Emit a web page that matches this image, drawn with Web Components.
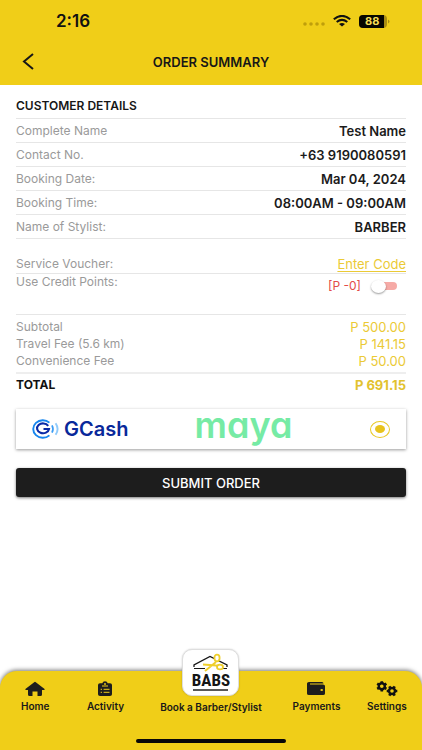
<!DOCTYPE html>
<html lang="en">
<head>
<meta charset="utf-8">
<meta name="viewport" content="width=device-width, initial-scale=1">
<title>Order Summary</title>
<style>
html, body { margin: 0; }
body { font-family: Inter, Roboto, "Liberation Sans", sans-serif; color: #171717; background: #fff;
  --brand: #f0ce18; --ink: #1d1d1d; --muted: #9a9a9a; --gold: #ebca35; --line: #e6e6e6; }
</style>
</head>
<body>
<order-page></order-page>
<script>
const define = (name, html) => customElements.define(name, class extends HTMLElement {
  constructor() {
    super();
    this.attachShadow({ mode: "open" }).innerHTML = html;
  }
});

define("status-bar", `
<style>
:host { display: flex; justify-content: space-between; align-items: center; height: 42px; padding: 0 32px 0 56px; color: #111; }
time { font-size: 17px; font-weight: 600; line-height: 20px; }
div { display: flex; align-items: center; gap: 8px; }
svg { display: block; }
.level { position: relative; display: flex; }
.level span { position: absolute; left: 6px; top: 0; font-size: 11px; line-height: 13px; font-weight: 700; color: #f5dc55; }
</style>
<time>2:16</time>
<div>
<svg width="22" height="10" viewBox="0 -7 22 10" fill="#bf9f0b"><circle cx="2" cy="1" r="1.8" /><circle cx="8" cy="1" r="1.8"/><circle cx="14" cy="1" r="1.8"/><circle cx="20" cy="1" r="1.8"/></svg>
<svg width="18" height="12" viewBox="0 0 18 12" fill="none" stroke="#111" stroke-width="2.1"><path d="M.8 4.2Q9-2.4 17.2 4.2M3.7 7Q9 2.8 14.3 7"/><path d="M9 11.6 6 9Q9 6.8 12 9Z" fill="#111" stroke="none"/></svg>
<span class="level"><svg width="31" height="13" viewBox="0 0 31 13"><rect width="28" height="13" rx="4" fill="#a98d12"/><path d="M4 0H25V13H4Q0 13 0 9V4Q0 0 4 0Z" fill="#070700"/><path d="M29 4.5Q32 6.5 29 8.5Z" fill="#a98d12"/></svg><span>88</span></span>
</div>`);

define("page-header", `
<style>
:host { display: block; background: var(--brand); }
header { display: grid; grid-template-columns: 40px 1fr 40px; align-items: center; height: 43px; padding: 0 8px 4px; box-sizing: border-box; }
button { width: 40px; height: 36px; border: 0; padding: 0; background: none; display: grid; place-items: center; color: #171717; }
h1 { margin: 0; font-size: 13px; line-height: 16px; font-weight: 600; text-align: center; }
</style>
<status-bar></status-bar>
<header><button type="button" aria-label="Back"><svg width="12" height="17" viewBox="0 0 12 17" fill="none" stroke="currentColor" stroke-width="2"><path d="M11 1 2 8.5 11 16"/></svg></button>
<h1><slot></slot></h1></header>`);

define("detail-row", `
<style>
:host { display: flex; justify-content: space-between; align-items: center; height: 24px; box-sizing: border-box; border-bottom: 1px solid var(--line); font-size: 12px; line-height: 16px; color: var(--muted); }
b { font-size: 13px; font-weight: 600; color: #1b1b1b; }
:host([plain]) { border: 0; height: 17px; }
:host([plain]) b { font-weight: 400; color: var(--gold); }
:host([total]) { border: 0; height: 22px; color: #111; font-weight: 700; }
:host([total]) b { color: #e2c22e; font-weight: 700; }
:host([voucher]) { height: 20px; }
:host([voucher]) b { font-weight: 400; }
</style>
<span><slot></slot></span><b><slot name="value"></slot></b>`);

define("points-toggle", `
<style>
:host { display: flex; justify-content: space-between; align-items: flex-start; height: 41px; box-sizing: border-box; border-bottom: 1px solid var(--line); font-size: 12px; line-height: 16px; color: var(--muted); }
div { display: flex; gap: 10px; align-items: center; padding: 4px 8px 0 0; }
output { color: #e44b49; }
input { appearance: none; margin: 0; width: 27px; height: 14px; display: flex; align-items: center; }
input::after { content: ""; width: 24px; height: 8px; margin-left: -13px; border-radius: 4px; background: #f6aaa6; }
input::before { content: ""; flex: none; z-index: 1; width: 15px; height: 13px; border-radius: 50%; background: #fff; box-shadow: 0 1px 2px #0006; }
input:checked::before { order: 1; margin-left: -13px; }
input:checked::after { margin-left: 0; }
</style>
<label for="points">Use Credit Points:</label>
<div><output for="points">[P -0]</output><input id="points" type="checkbox" role="switch"></div>`);

define("gcash-logo", `
<style>
:host { display: flex; align-items: center; gap: 4px; color: #09289a; font-size: 20px; line-height: 22px; font-weight: 600; }
svg { display: block; }
</style>
<svg width="28" height="20" viewBox="0 0 28 20" fill="none">
<path d="M17.4 3.600A9.600 8.800 0 1 0 17.400 16.400" stroke="#1686ee" stroke-width="1.900"/>
<path d="M16.200 6.800A6 4.900 0 1 0 17 10H11.500" stroke="#0a2aa6" stroke-width="2.100"/>
<path d="M20 6.300Q22 10 20 13.700" stroke="#3b9df5" stroke-width="1.700"/>
<path d="M23.600 4.300Q27.600 10 23.600 15.700" stroke="#8fcafb" stroke-width="1.900"/></svg><span>GCash</span>`);

define("maya-logo", `
<style>
:host { display: block; color: #76eba5; font-size: 36px; line-height: 36px; font-weight: 600; font-feature-settings: "cv11" 1; }
</style>maya`);

define("payment-option", `
<style>
:host { display: block; background: #fff; box-shadow: 0 1px 3px #0006; }
label { display: grid; grid-template-columns: 5fr auto 3fr; align-items: center; height: 40px; padding: 0 16px; }
maya-logo { margin-top: -8px; }
input { appearance: none; justify-self: end; margin: 0; width: 20px; height: 17px; border: 1px solid #e8c925; border-radius: 50%; display: grid; place-items: center; }
input:checked::before { content: ""; width: 10px; height: 8px; border-radius: 50%; background: #e8c31c; }
</style>
<label><gcash-logo></gcash-logo><maya-logo></maya-logo><input type="radio" name="payment" aria-label="GCash or Maya" checked></label>`);

define("submit-button", `
<style>
:host { display: block; }
button { width: 100%; height: 29px; border: 0; border-radius: 3px; padding: 0; background: var(--ink); color: #fff; font: 500 13px/16px Inter, Roboto, sans-serif; box-shadow: 0 1px 3px #0008; }
</style>
<button type="submit"><slot></slot></button>`);

define("babs-badge", `
<style>
:host { display: grid; place-items: center; width: 57px; height: 47px; box-sizing: border-box; border: 1px solid #dedede; border-radius: 10px; background: #fff; box-shadow: 0 0 2px #0003; }
svg { display: block; }
text { font-family: "Liberation Sans Narrow", "Roboto Condensed", "DejaVu Sans Condensed", sans-serif; font-size: 17px; font-weight: 700; }
</style>
<svg width="40" height="40" viewBox="0 0 40 40">
<path d="M3 14V12L19 3.500 36 12V14" fill="none" stroke="#171717" stroke-width="1.300"/>
<path d="M3 15.500H14M26 15.500H36" stroke="#171717" stroke-width="1.200"/>
<text x="20" y="33" text-anchor="middle" fill="#151515">BABS</text>
<path d="M2 37H37" stroke="#222" stroke-width="1.400"/>
<path d="M12 11.500 25 12.500 28 13.500M14 18 25 9" fill="none" stroke="#efcf2a" stroke-width="2"/>
<ellipse cx="26" cy="5" rx="2.600" ry="3.300" fill="#fff" stroke="#efcf2a" stroke-width="1.800"/><ellipse cx="29" cy="14" rx="3" ry="2.400" fill="#fff" stroke="#efcf2a" stroke-width="1.800"/>
</svg>`);

define("nav-item", `
<style>
:host { display: block; }
a { display: flex; flex-direction: column; align-items: center; gap: 2px; color: #191919; text-decoration: none; font-size: 10px; line-height: 14px; font-weight: 600; white-space: nowrap; }
:host(.book) a { gap: 4px; }
::slotted(svg) { display: block; }
</style>
<a href="#"><slot name="icon"></slot><span><slot></slot></span></a>`);

define("bottom-nav", `
<style>
:host { display: block; background: var(--brand); border-radius: 17px 17px 0 0; box-shadow: 0 -1px 4px #0008; }
nav { display: grid; grid-template: 42px / 1fr 1fr 2fr 1fr 1fr; align-items: end; }
.book { margin-bottom: -1px; }
.bar { width: 150px; height: 4px; border-radius: 2px; background: #080808; margin: 26px auto 0; }
:host { padding-bottom: 7px; }
</style>
<nav aria-label="Main">
<nav-item><svg slot="icon" width="20" height="16" viewBox="0 0 20 16" fill="#1d1d1d"><path d="M9.2 1.2Q10 .5 10.8 1.2L19.6 8Q20 9 19 9H17V13.5Q17 15 15.5 15H12.5V10.5H7.5V15H4.500Q3 15 3 13.500V9H1Q0 9 .4 8Z"/></svg>Home</nav-item>
<nav-item><svg slot="icon" width="14" height="16" viewBox="0 0 14 16"><path d="M2 2.300H4.300Q4.700.3 7 .3T9.700 2.300H12Q14 2.300 14 4V13.300Q14 15 12 15H2Q0 15 0 13.300V4Q0 2.300 2 2.300Z" fill="#1d1d1d"/><circle cx="7" cy="3" r=".9" fill="#f0ce18"/><path d="M4 5H10M5.600 8.300H11.500M5.600 11.300H11.500M2.700 8.300H4M2.700 11.300H4" stroke="#f0ce18"/></svg>Activity</nav-item>
<nav-item class="book"><babs-badge slot="icon"></babs-badge>Book a Barber/Stylist</nav-item>
<nav-item><svg slot="icon" width="18" height="16" viewBox="0 0 18 16"><path d="M2 1H15Q16.500 1 16.500 2.500H3V3.500H16Q18 3.500 18 5V12.500Q18 14 16 14H2Q0 14 0 12.500V2.500Q0 1 2 1Z" fill="#1d1d1d"/><ellipse cx="14.700" cy="9" rx="1.300" ry="1" fill="#f0ce18"/></svg>Payments</nav-item>
<nav-item><svg slot="icon" width="22" height="16" viewBox="0 0 22 16" fill="none" stroke="#111"><circle cx="5.800" cy="5.300" r="3" stroke-width="2.400"/><path d="M5.800.2V2.200M5.800 8.400V10.400M1.200 2.700 3.200 3.900M8.400 6.700 10.400 7.900M1.200 7.900 3.200 6.700M8.400 3.900 10.400 2.700" stroke-width="2.600"/><circle cx="16" cy="10" r="3" stroke-width="2.400"/><path d="M10.700 10H12.700M19.300 10H21.300M13.300 5.400 14.500 7.400M17.500 12.600 18.700 14.600M13.300 14.600 14.500 12.600M17.500 7.400 18.700 5.400" stroke-width="2.600"/></svg>Settings</nav-item>
</nav>
<div class="bar"></div>`);

define("order-page", `
<style>
:host { display: flex; flex-direction: column; min-height: 100vh; }
main { padding: 0 16px 80px; }
h2 { margin: 0; padding: 13px 0 4px; font-size: 12px; line-height: 16px; font-weight: 600; color: #171717; border-bottom: 1px solid var(--line); }
a { color: var(--gold); text-decoration: underline; text-underline-offset: 2px; }
.voucher { margin-top: 15px; }
.fees { padding: 3px 0; border-bottom: 2px solid #eee; }
payment-option { margin-top: 13px; }
submit-button { margin-top: 19px; }
bottom-nav { position: sticky; bottom: 0; margin-top: auto; }
</style>
<page-header>ORDER SUMMARY</page-header>
<main>
<h2>CUSTOMER DETAILS</h2>
<detail-row>Complete Name<span slot="value">Test Name</span></detail-row>
<detail-row>Contact No.<span slot="value">+63 9190080591</span></detail-row>
<detail-row>Booking Date:<span slot="value">Mar 04, 2024</span></detail-row>
<detail-row>Booking Time:<span slot="value">08:00AM - 09:00AM</span></detail-row>
<detail-row>Name of Stylist:<span slot="value">BARBER</span></detail-row>
<detail-row voucher class="voucher">Service Voucher:<a slot="value" href="#">Enter Code</a></detail-row>
<points-toggle></points-toggle>
<div class="fees">
<detail-row plain>Subtotal<span slot="value">P 500.00</span></detail-row>
<detail-row plain>Travel Fee (5.6 km)<span slot="value">P 141.15</span></detail-row>
<detail-row plain>Convenience Fee<span slot="value">P 50.00</span></detail-row>
</div>
<detail-row total>TOTAL<span slot="value">P 691.15</span></detail-row>
<payment-option></payment-option>
<submit-button>SUBMIT ORDER</submit-button>
</main>
<bottom-nav></bottom-nav>`);
</script>
</body>
</html>
